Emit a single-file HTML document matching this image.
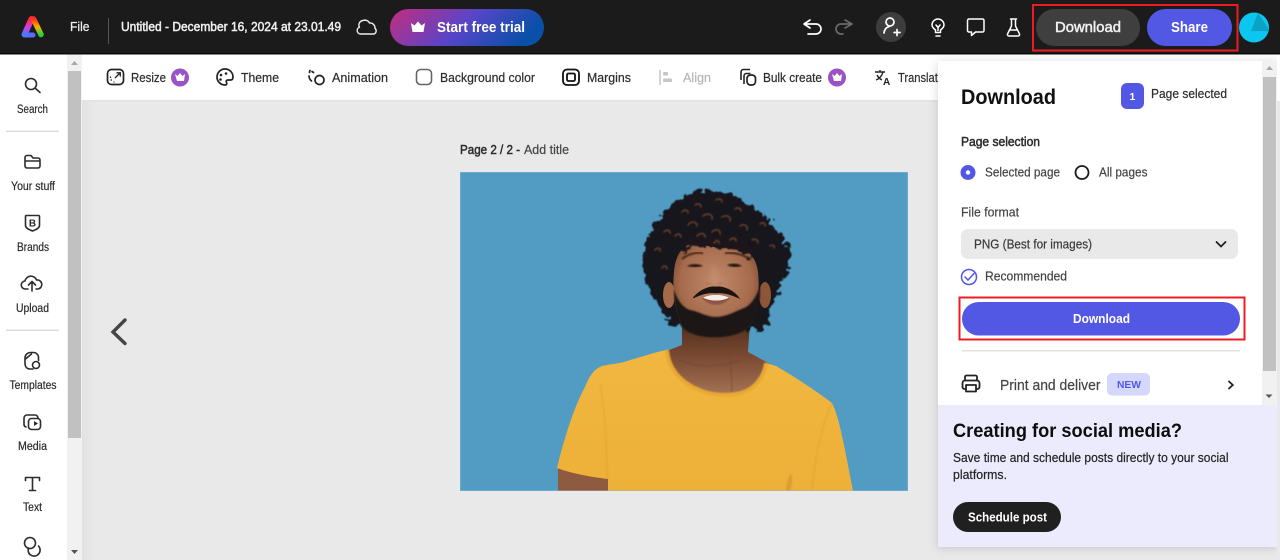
<!DOCTYPE html>
<html>
<head>
<meta charset="utf-8">
<style>
html,body{margin:0;padding:0;width:1280px;height:560px;overflow:hidden;background:#e9e9e9}
svg{display:block;position:absolute;left:0;top:0;filter:blur(.3px)}
text{font-family:"Liberation Sans",sans-serif;font-size:13px;color:#2c2c2c;fill:currentColor;stroke:currentColor;stroke-width:.2}
.s{font-size:11.500px}
.b{font-weight:bold;stroke-width:0}
.m{stroke-width:.5}
.ic{fill:none;stroke:#2c2c2c;stroke-width:1.600;stroke-linecap:round;stroke-linejoin:round}
.iw{fill:none;stroke:#fff;stroke-width:1.700;stroke-linecap:round;stroke-linejoin:round}
</style>
</head>
<body>
<svg width="1280" height="560" viewBox="0 0 1280 560" xmlns="http://www.w3.org/2000/svg">
<defs>
<linearGradient id="trial" x1="0" y1="0" x2="1" y2="0.25"><stop offset="0" stop-color="#c42d7c"/><stop offset=".55" stop-color="#5845c9"/><stop offset="1" stop-color="#0b50a8"/></linearGradient>
<linearGradient id="la" x1="0" y1="0" x2="0" y2="1"><stop offset="0" stop-color="#ff2a30"/><stop offset=".5" stop-color="#d43ce0"/><stop offset="1" stop-color="#4a78ff"/></linearGradient>
<linearGradient id="lb" x1="0" y1="0" x2="0" y2="1"><stop offset="0" stop-color="#ff3020"/><stop offset=".5" stop-color="#ffb000"/><stop offset="1" stop-color="#28d040"/></linearGradient>
<linearGradient id="shirt" x1="0" y1="0" x2="0" y2="1"><stop offset="0" stop-color="#f1b740"/><stop offset="1" stop-color="#edb038"/></linearGradient>
<linearGradient id="neck" x1="0" y1="0" x2="0" y2="1"><stop offset="0" stop-color="#4f2c1d"/><stop offset=".45" stop-color="#7a4a32"/><stop offset="1" stop-color="#a87658"/></linearGradient>
<radialGradient id="face" cx=".5" cy=".42" r=".6"><stop offset="0" stop-color="#c08a6a"/><stop offset=".7" stop-color="#a66b4c"/><stop offset="1" stop-color="#74452e"/></radialGradient>
<linearGradient id="cvs" x1="0" y1="0" x2="1" y2="0"><stop offset="0" stop-color="#e2e2e2"/><stop offset="1" stop-color="#e9e9e9"/></linearGradient>
<filter id="curl" x="-15%" y="-15%" width="130%" height="130%"><feTurbulence type="fractalNoise" baseFrequency=".14" numOctaves="2" seed="4"/><feDisplacementMap in="SourceGraphic" scale="13" xChannelSelector="R" yChannelSelector="G"/><feGaussianBlur stdDeviation=".4"/></filter>
<filter id="sf" x="-10%" y="-10%" width="120%" height="120%"><feGaussianBlur stdDeviation=".8"/></filter>
<filter id="sf2" x="-20%" y="-20%" width="140%" height="140%"><feGaussianBlur stdDeviation="1.500"/></filter>
<filter id="sh" x="-10%" y="-10%" width="120%" height="120%"><feDropShadow dx="0" dy="1" stdDeviation="5" flood-color="#000" flood-opacity=".16"/></filter>
<clipPath id="photo"><rect x="460" y="172" width="448" height="319"/></clipPath>
</defs>

<!-- canvas -->
<rect width="1280" height="560" fill="#e9e9e9"/>
<rect x="82" y="101" width="14" height="459" fill="url(#cvs)"/>

<!-- toolbar -->
<rect x="67" y="54" width="1213" height="47" fill="#fff"/>
<rect x="82" y="100" width="856" height="2" fill="#e3e3e3"/>

<!-- sidebar -->
<rect x="0" y="54" width="67" height="506" fill="#fff"/>
<rect x="67" y="54" width="15" height="506" fill="#f1f1f1"/>
<rect x="68" y="71" width="13" height="367" fill="#c1c1c1"/>
<path d="M71 550l3.500 4 3.500-4z" fill="#555"/>
<path d="M71 65l3.500-4 3.500 4z" fill="#a8a8a8"/>
<rect x="6" y="130.500" width="53" height="1.500" fill="#dcdcdc"/>
<rect x="6" y="329.500" width="53" height="1.500" fill="#dcdcdc"/>

<g class="ic">
<circle cx="31" cy="84" r="5.500"/><path d="M35 88l5 4.500"/>
<path d="M25 157.500a2 2 0 0 1 2-2h4l2 2.500h5a2 2 0 0 1 2 2v6a2 2 0 0 1-2 2H27a2 2 0 0 1-2-2zM25 161h15"/>
<path d="M26.500 215.500h12a1 1 0 0 1 1 1v9c0 2.500-3 4-7 5.500-4-1.500-7-3-7-5.500v-9a1 1 0 0 1 1-1z"/>
<path d="M28 289h-2.500a4 4 0 0 1-.5-8 6 6 0 0 1 11.500-1 4.500 4.500 0 0 1 1.500 9h-2M32 291v-9M28.500 285l3.500-3.500 3.500 3.500"/>
<path d="M25 363v-5a5.500 5.500 0 0 1 5.500-5.500h3a5 5 0 0 1 5 5v3M25 363c0 4 2 6 5 6h3M25.500 359l6-5"/>
<circle cx="36" cy="365" r="3.500"/>
<path d="M26 427a3 3 0 0 1-2-3v-6a3 3 0 0 1 3-3h8a3 3 0 0 1 3 3"/>
<rect x="28.500" y="418.500" width="12" height="11" rx="3"/>
<path d="M25.500 480.500V477.500h14V480.500M32.500 477.500V490.500M29.500 490.500h6"/>
<circle cx="30" cy="543" r="5.500"/>
<path d="M28.500 548a6 6 0 1 0 10-2"/>
</g>
<text x="32.500" y="226.500" text-anchor="middle" class="b" style="font-size:10px">B</text>
<path d="M34 426v-5l4 2.500z" fill="#2c2c2c"/>

<text x="17" y="113" textLength="31" lengthAdjust="spacingAndGlyphs" class="s">Search</text>
<text x="11" y="190" textLength="44" lengthAdjust="spacingAndGlyphs" class="s">Your stuff</text>
<text x="17" y="251" textLength="32" lengthAdjust="spacingAndGlyphs" class="s">Brands</text>
<text x="16" y="312" textLength="33" lengthAdjust="spacingAndGlyphs" class="s">Upload</text>
<text x="9.500" y="389" textLength="47" lengthAdjust="spacingAndGlyphs" class="s">Templates</text>
<text x="18" y="450" textLength="29" lengthAdjust="spacingAndGlyphs" class="s">Media</text>
<text x="23" y="511" textLength="19" lengthAdjust="spacingAndGlyphs" class="s">Text</text>

<!-- toolbar items -->
<rect x="107.500" y="69.500" width="16" height="15" rx="4" fill="none" stroke="#222" stroke-width="1.700"/>
<path d="M115 78l5-5M116.500 72.800h3.800v3.800M110.500 80h1.500M110.500 76.500v1.500M113.500 82h1" fill="none" stroke="#222" stroke-width="1.300"/>
<text x="131" y="82" textLength="35" lengthAdjust="spacingAndGlyphs">Resize</text>
<circle cx="180" cy="77.500" r="9" fill="#9a52c4"/>
<path d="M175 74l2.500 2 2.500-3 2.500 3 2.500-2-1 7h-7z" fill="#fff"/>

<path d="M225 69a8 8 0 1 0 0 16c2 0 2-1.500 1.500-2.500-.8-1.500 0-2.500 1.500-2.500h2.500c1.500 0 2.500-1 2.500-3 0-4.500-3.500-8-8-8z" fill="none" stroke="#222" stroke-width="1.700"/>
<circle cx="221" cy="75" r="1.300" fill="#222"/><circle cx="226" cy="73.500" r="1.300" fill="#222"/><circle cx="220.500" cy="79.500" r="1.300" fill="#222"/>
<text x="241" y="82" textLength="38" lengthAdjust="spacingAndGlyphs">Theme</text>

<circle cx="319.500" cy="80" r="4.500" fill="none" stroke="#222" stroke-width="1.700"/>
<path d="M310 70.500a5 5 0 0 0-.5 2M309 76a7 7 0 0 0 2.500 5M312 71.500l1.500 1" fill="none" stroke="#222" stroke-width="1.700" stroke-linecap="round"/>
<text x="332" y="82" textLength="56" lengthAdjust="spacingAndGlyphs">Animation</text>

<rect x="416.500" y="69.500" width="15" height="15" rx="4" fill="none" stroke="#666" stroke-width="1.600"/>
<text x="440" y="82" textLength="95" lengthAdjust="spacingAndGlyphs">Background color</text>

<rect x="563" y="69.500" width="16" height="15.500" rx="4" fill="none" stroke="#111" stroke-width="1.800"/>
<rect x="567" y="73.500" width="8" height="7.500" rx="1.500" fill="none" stroke="#111" stroke-width="1.800"/>
<text x="587" y="82" textLength="44" lengthAdjust="spacingAndGlyphs">Margins</text>

<path d="M660 70v15" stroke="#c6c6c6" stroke-width="1.500"/>
<rect x="663" y="72" width="5" height="3.500" rx="1" fill="#c6c6c6"/><rect x="663" y="78.500" width="9" height="3.500" rx="1" fill="#c6c6c6"/>
<text x="683" y="82" textLength="28" lengthAdjust="spacingAndGlyphs" style="color:#b5b5b5">Align</text>

<path d="M741 80v-8a2.500 2.500 0 0 1 2.500-2.500H750M744 84v-8a2.500 2.500 0 0 1 2.500-2.500h4" fill="none" stroke="#222" stroke-width="1.600"/>
<rect x="747" y="75" width="8.500" height="10" rx="3.500" fill="none" stroke="#222" stroke-width="1.700"/>
<text x="763" y="82" textLength="59" lengthAdjust="spacingAndGlyphs">Bulk create</text>
<circle cx="837" cy="77.500" r="9" fill="#9a52c4"/>
<path d="M832 74l2.500 2 2.500-3 2.500 3 2.500-2-1 7h-7z" fill="#fff"/>

<path d="M875 72h10M880 70v2M883 72c-1 4-4 7-7 8M877 75c1 2 3 4 5 5" fill="none" stroke="#222" stroke-width="1.400"/>
<text x="883" y="85" class="b" style="font-size:10px;color:#222">A</text>
<text x="898" y="82" textLength="46" lengthAdjust="spacingAndGlyphs">Translate</text>

<!-- page label -->
<text x="460" y="154" textLength="60" lengthAdjust="spacingAndGlyphs" class="m">Page 2 / 2 -</text>
<text x="524" y="154" textLength="45" lengthAdjust="spacingAndGlyphs" style="color:#444">Add title</text>

<!-- arrow -->
<path d="M125 320l-12 12 12 11.500" fill="none" stroke="#454545" stroke-width="3.400" stroke-linecap="round"/>

<!-- photo -->
<g clip-path="url(#photo)">
<rect x="460" y="172" width="448" height="319" fill="#529bc3"/>
<!-- arm -->
<path d="M558 468L558 491H610L608 476z" fill="#8e5a40"/>
<!-- neck -->
<path d="M682 322L682 345 664 352 676 392 745 398 770 364 748 352 750 322z" fill="url(#neck)"/>
<path d="M680 360c15 8 40 8 62 0M730 352l2 40" fill="none" stroke="#6e4330" stroke-width="1" opacity=".6" filter="url(#sf)"/>
<!-- shirt -->
<path d="M557 468C565 435 575 405 585 387C590 375 594 369 602 366C610 364 620 364 630 360C645 356 655 352 667 350C668 366 678 380 695 388C710 396 735 398 750 389C760 382 765 372 766 363L776 366C795 377 815 390 832 403C838 415 842 435 846 455L853 491H608L608 479C590 477 570 473 557 468Z" fill="url(#shirt)"/>
<path d="M667 350C668 366 678 380 695 388C710 396 735 398 750 389C760 382 765 372 766 363" fill="none" stroke="#e8a933" stroke-width="4" filter="url(#sf)"/>
<path d="M600 384C606 415 606 455 608 479M832 403C822 425 815 455 812 491" fill="none" stroke="#dc9e2e" stroke-width="1.500" opacity=".5" filter="url(#sf)"/>
<path d="M790 491c2-8 3-12 1-18-3 4-5 12-5 18z" fill="#c48d2c" opacity=".5" filter="url(#sf)"/>
<!-- hair back -->
<g filter="url(#curl)">
<path d="M693 193C705 188 722 190 735 197C750 203 765 212 773 226C785 238 792 252 789 266C786 282 775 295 771 305C770 320 766 328 758 330L672 325C664 318 660 308 655 298C645 285 640 265 645 248C648 232 660 215 672 205C680 198 686 195 693 193Z" fill="#17141a"/>
</g>
<!-- ears -->
<ellipse cx="669" cy="295" rx="6" ry="13" fill="#a46a49"/>
<ellipse cx="765" cy="295" rx="6" ry="13" fill="#8e5639"/>
<!-- face -->
<path d="M674 272C675 255 683 244 695 243C708 246 722 250 730 246C745 246 756 255 758 272C760 290 758 315 750 325C740 338 695 340 682 326C675 312 672 290 674 272Z" fill="url(#face)"/>
<!-- fringe -->
<g filter="url(#curl)">
<path d="M682 246C690 234 700 232 712 236C722 232 738 232 748 240C752 248 754 256 756 260C748 254 738 250 730 248C722 252 716 248 712 246C702 244 692 244 682 254z" fill="#1d161a"/>
</g>
<!-- brown curl highlights -->
<g fill="none" stroke="#6f4129" stroke-width="1.500" stroke-linecap="round" filter="url(#sf)">
<path d="M688 225c4-5 9-3 9 1M703 216c5-4 10-1 9 3M697 236c3-4 8-3 8 1M712 232c4-4 9-2 8 2M722 217c5-3 9 0 8 4M740 226c4-3 8 0 7 4M752 240c3-2 6 0 6 3M730 240c3-3 6-2 6 1M675 236c3-3 6-2 6 1M714 243c2-3 5-3 5 0M735 209c3-2 6-1 6 2M682 212c3-3 6-2 6 1M664 232c3-3 6-2 6 1M760 224c3-2 6-1 5 2M770 246c3-2 5 0 4 2M655 250c3-3 6-2 5 1M695 205c3-2 6-1 6 2M716 200c3-2 6-1 6 2M662 268c2-3 5-2 5 1"/>
</g>
<!-- brows / eyes -->
<path d="M682 259C688 254 696 252 703 253" stroke="#3c2318" stroke-width="1.800" fill="none" filter="url(#sf)"/>
<path d="M725 253C735 252 745 255 750 260" stroke="#3c2318" stroke-width="1.800" fill="none" filter="url(#sf)"/>
<path d="M687 266c5-2.500 11-2.500 16 0-5 1.500-11 1.500-16 0zM727 265c5-2 11-2 15 1-5 1.500-11 1.500-15-1z" fill="#241510" filter="url(#sf)"/>
<!-- nose -->
<path d="M708 282c3-8 3-16 6-18 4 3 4 12 7 18-4 3-9 3-13 0z" fill="#c89673" opacity=".35" filter="url(#sf2)"/>
<path d="M706 282c5 3 11 3 16 0-2 3-14 3-16 0z" fill="#53301f" filter="url(#sf)"/>
<!-- beard -->
<path d="M674 290C678 302 684 308 690 310C698 311 706 317 716 317C726 317 736 311 744 308C750 306 756 298 760 286C761 305 756 320 750 326C738 340 695 342 682 327C677 318 674 305 674 290Z" fill="#1f1512" filter="url(#sf)"/>
<!-- lips & teeth -->
<path d="M702 298C710 294 722 294 730 298C724 307 708 307 702 298Z" fill="#8f5542" filter="url(#sf)"/>
<path d="M703 297.500C711 294 721 294 729 297.500C722 301.500 710 301.500 703 297.500Z" fill="#f5efe9"/>
<!-- mustache -->
<path d="M693 298C699 291 708 286 716 287C724 286 734 291 739 298C730 294 722 292 716 293C708 292 702 294 693 298Z" fill="#1c1210" stroke="#1c1210" stroke-width=".8"/>
<rect x="460" y="172" width="448" height="319" fill="none" stroke="#8fc0da" stroke-width=".8"/>
</g>

<!-- panel -->
<g filter="url(#sh)">
<rect x="938" y="61" width="339" height="486" fill="#fff"/>
</g>
<rect x="1277" y="54" width="3" height="506" fill="#e9e9e9"/>
<rect x="1277" y="54" width="3" height="47" fill="#fff"/>
<rect x="1262" y="61" width="15" height="344" fill="#f1f1f1"/>
<rect x="1263" y="77" width="13" height="294" fill="#c1c1c1"/>
<path d="M1266 70l3.500-4 3.500 4z" fill="#a8a8a8"/>
<path d="M1265.500 394.500l3.500 3.500 3.500-3.500z" fill="#555"/>
<rect x="938" y="405" width="339" height="142" fill="#ecebfd"/>

<text x="961" y="104" textLength="95" lengthAdjust="spacingAndGlyphs" class="b" style="font-size:21px;color:#111">Download</text>
<rect x="1121" y="83" width="23" height="26" rx="6" fill="#5258e4"/>
<text x="1129.500" y="100" class="b" style="font-size:10.500px;color:#fff">1</text>
<text x="1151" y="98" textLength="76" lengthAdjust="spacingAndGlyphs">Page selected</text>
<text x="961" y="146" textLength="79" lengthAdjust="spacingAndGlyphs" class="m">Page selection</text>
<circle cx="968" cy="172.500" r="7.500" fill="#5258e4"/><circle cx="968" cy="172.500" r="2.200" fill="#fff"/>
<text x="985" y="176.500" textLength="75" lengthAdjust="spacingAndGlyphs" style="color:#444">Selected page</text>
<circle cx="1082" cy="172.500" r="6.500" fill="#fff" stroke="#1a1a1a" stroke-width="1.800"/>
<text x="1099" y="176.500" textLength="48.500" lengthAdjust="spacingAndGlyphs" style="color:#444">All pages</text>
<text x="961" y="216.500" textLength="58" lengthAdjust="spacingAndGlyphs" style="color:#444">File format</text>
<rect x="961" y="229" width="277" height="30" rx="7" fill="#e9e9e9"/>
<text x="974" y="248.500" textLength="118" lengthAdjust="spacingAndGlyphs" style="color:#3a3a3a">PNG (Best for images)</text>
<path d="M1216.500 242l4.500 4.500 4.500-4.500" fill="none" stroke="#222" stroke-width="1.800" stroke-linecap="round"/>
<circle cx="969" cy="277" r="7.500" fill="none" stroke="#5258e4" stroke-width="1.500"/>
<path d="M965 277l3 3 6-6.500" fill="none" stroke="#5258e4" stroke-width="1.500" stroke-linecap="round"/>
<text x="985" y="280.500" textLength="82" lengthAdjust="spacingAndGlyphs" style="color:#444">Recommended</text>
<rect x="959.500" y="297.500" width="285" height="42" fill="none" stroke="#ed1c24" stroke-width="2"/>
<rect x="962" y="302" width="278" height="33.500" rx="16.700" fill="#5258e4"/>
<text x="1073" y="323" textLength="57" lengthAdjust="spacingAndGlyphs" class="b" style="color:#fff">Download</text>
<rect x="962" y="350" width="278" height="1.500" fill="#e3e3e3"/>
<g fill="none" stroke="#222" stroke-width="1.800" stroke-linejoin="round">
<path d="M965 381v-4a1.500 1.500 0 0 1 1.500-1.500h9a1.500 1.500 0 0 1 1.500 1.500v4"/>
<path d="M965.500 389h-1a2 2 0 0 1-2-2v-4a2.500 2.500 0 0 1 2.500-2.500h12a2.500 2.500 0 0 1 2.500 2.500v4a2 2 0 0 1-2 2h-1"/>
<rect x="966" y="385" width="10" height="6.500"/>
</g>
<text x="1000" y="390" textLength="100.500" lengthAdjust="spacingAndGlyphs" style="font-size:15px;color:#444">Print and deliver</text>
<rect x="1107" y="373" width="43" height="22.500" rx="5" fill="#d5d7fc"/>
<text x="1117" y="388" textLength="24" lengthAdjust="spacingAndGlyphs" class="b" style="font-size:10.500px;color:#5258e4">NEW</text>
<path d="M1229 381.500l3.800 3.500-3.800 3.500" fill="none" stroke="#222" stroke-width="1.800" stroke-linecap="round"/>

<text x="953" y="437" textLength="229" lengthAdjust="spacingAndGlyphs" class="b" style="font-size:19.500px;color:#0d0d0d">Creating for social media?</text>
<text x="953" y="462" textLength="275.500" lengthAdjust="spacingAndGlyphs" style="color:#222">Save time and schedule posts directly to your social</text>
<text x="953" y="479" textLength="54" lengthAdjust="spacingAndGlyphs" style="color:#222">platforms.</text>
<rect x="953" y="502" width="108" height="30" rx="15" fill="#202020"/>
<text x="968" y="521.500" textLength="79" lengthAdjust="spacingAndGlyphs" class="b" style="color:#fff">Schedule post</text>

<!-- top bar -->
<rect x="0" y="0" width="1280" height="54" fill="#1b1b1b"/>
<rect x="0" y="53" width="1280" height="1.500" fill="#0a0a0a"/>
<!-- logo -->
<path d="M24.500 35H33" stroke="#5a6cff" stroke-width="5" stroke-linecap="round" fill="none"/>
<path d="M31.500 19L24.500 34.500" stroke="url(#la)" stroke-width="6" stroke-linecap="round" fill="none"/>
<path d="M33.500 19L41 34.500" stroke="url(#lb)" stroke-width="5.500" stroke-linecap="round" fill="none"/>

<text x="70" y="31" textLength="19.500" lengthAdjust="spacingAndGlyphs" style="color:#f0f0f0;font-size:12.500px">File</text>
<rect x="108" y="18" width="1" height="26" fill="#555"/>
<text x="121" y="31" textLength="220" lengthAdjust="spacingAndGlyphs" class="m" style="color:#f0f0f0;font-size:13px">Untitled - December 16, 2024 at 23.01.49</text>
<path d="M362 34h-1.500a3.500 3.500 0 0 1-1-6.800 4.500 4.500 0 0 1 3.500-6.700c2.500-1 5.500.2 6.500 2.500a5 5 0 0 1 5.500 5.300 3.400 3.400 0 0 1-.9 5.700z" fill="none" stroke="#eee" stroke-width="1.400" stroke-linejoin="round"/>
<rect x="390" y="9" width="154" height="37" rx="18.500" fill="url(#trial)"/>
<path d="M411 23l3.500 2.500 3.500-4 3.500 4 3.500-2.500-1.500 9h-11z" fill="#fff"/>
<text x="437" y="32" textLength="88" lengthAdjust="spacingAndGlyphs" class="b" style="color:#fff;font-size:14.500px">Start free trial</text>

<!-- undo redo -->
<path class="iw" d="M810 20l-6 4 6 4M804 24h12a5 5 0 0 1 0 10h-8"/>
<path d="M845 20l7 4-7 4M852 24h-11a5 5 0 0 0 0 10h2" fill="none" stroke="#6a6a6a" stroke-width="1.700" stroke-linecap="round" stroke-linejoin="round"/>
<circle cx="891" cy="27" r="15" fill="#3d3d3d"/>
<g class="iw">
<circle cx="890" cy="22" r="4"/><path d="M884 33c.3-3.500 2.500-6 5-6.300M897 29.500v6M894 32.500h6"/>
</g>
<g class="iw" style="stroke-width:1.500">
<path d="M935.500 32.500v-2.500c-2-1.500-3.500-3-3.500-5a6 6 0 0 1 12 0c0 2-1.500 3.500-3.500 5v2.500zM936 36h4M936 25l2 2.500 2-2.500M938 27.500v3"/>
<path d="M967.500 20.500a1.500 1.500 0 0 1 1.500-1.500h13.500a1.500 1.500 0 0 1 1.500 1.500v10a1.500 1.500 0 0 1-1.500 1.500h-7l-4 3.500V32h-2.500a1.500 1.500 0 0 1-1.500-1.500z"/>
<path d="M1010.500 19h6M1011.500 19v7l-4 8a1.500 1.500 0 0 0 1.500 2h9a1.500 1.500 0 0 0 1.500-2l-4-8v-7M1010 30h7"/>
</g>

<!-- red box & buttons -->
<rect x="1033" y="5" width="204.500" height="45.500" fill="none" stroke="#ed1c24" stroke-width="2"/>
<rect x="1036" y="9" width="104" height="37" rx="18.500" fill="#3f3f3f"/>
<text x="1055" y="32" textLength="66" lengthAdjust="spacingAndGlyphs" class="m" style="color:#f0f0f0;font-size:14.500px">Download</text>
<rect x="1147" y="9" width="85" height="37" rx="18.500" fill="#5258e4"/>
<text x="1171" y="32" textLength="37" lengthAdjust="spacingAndGlyphs" class="b" style="color:#fff;font-size:14.500px">Share</text>
<circle cx="1254" cy="27.500" r="15" fill="#0bc6ee"/>
<path d="M1258 13l10 15v3h-17z" fill="#0ba2c6"/>
</svg>
</body>
</html>
